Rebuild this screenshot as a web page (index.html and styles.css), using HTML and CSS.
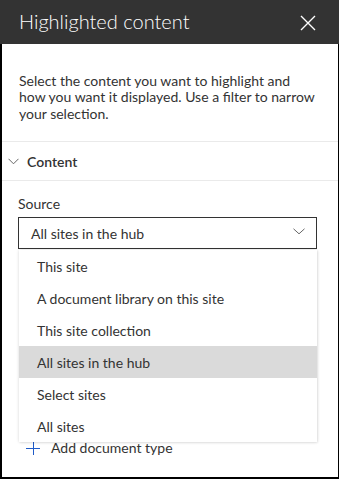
FILE: index.html
```html
<!DOCTYPE html>
<html lang="en">
<head>
<meta charset="utf-8">
<title>Highlighted content</title>
<link rel="stylesheet" href="styles.css">
</head>
<body>
<div class="panel">
  <header class="panel-head">
    <h1 class="panel-title">Highlighted content</h1>
    <button class="close-btn" aria-label="Close">
      <svg width="16" height="16" viewBox="0 0 16 16"><path d="M1 1 L15 15 M15 1 L1 15" stroke="#fff" stroke-width="1.4" fill="none"/></svg>
    </button>
  </header>
  <div class="panel-body">
    <p class="intro">Select the content you want to highlight and how you want it displayed. Use a filter to narrow your selection.</p>
    <section class="group">
      <div class="group-head">
        <svg class="group-chevron" width="11" height="7" viewBox="0 0 11 7"><path d="M0.5 0.8 L5.5 5.8 L10.5 0.8" stroke="#666" stroke-width="1" fill="none"/></svg>
        <span>Content</span>
      </div>
      <div class="group-body">
        <label class="field-label">Source</label>
        <div class="select-wrap">
          <div class="select">
            <span>All sites in the hub</span>
            <svg width="12" height="7" viewBox="0 0 12 7"><path d="M0.5 0.8 L6 5.8 L11.5 0.8" stroke="#666" stroke-width="1" fill="none"/></svg>
          </div>
          <ul class="menu">
            <li class="menu-item">This site</li>
            <li class="menu-item">A document library on this site</li>
            <li class="menu-item">This site collection</li>
            <li class="menu-item is-selected">All sites in the hub</li>
            <li class="menu-item">Select sites</li>
            <li class="menu-item">All sites</li>
          </ul>
        </div>
        <div class="add-row">
          <svg width="14" height="14" viewBox="0 0 14 14"><path d="M7.5 0 V14 M0 7.5 H14" stroke="#1f5bc8" stroke-width="1" fill="none"/></svg>
          <span>Add document type</span>
        </div>
      </div>
    </section>
  </div>
</div>
</body>
</html>
```
FILE: styles.css
```css
html, body {
  margin: 0;
  padding: 0;
  background: #fff;
}
body {
  width: 339px;
  height: 479px;
  overflow: hidden;
  font-family: "Lato", "Open Sans", sans-serif;
  font-size: 14px;
  color: #333;
}
.panel {
  width: 339px;
  height: 479px;
  display: flex;
  flex-direction: column;
}
.panel-head {
  height: 44px;
  flex: none;
  background: #333;
  display: flex;
  align-items: center;
  justify-content: space-between;
  padding: 0 23px 0 19px;
  box-sizing: border-box;
}
.panel-title {
  margin: 0 0 2px 0;
  font-weight: 300;
  font-size: 20px;
  line-height: 24px;
  color: #fff;
}
.close-btn {
  border: 0;
  padding: 0;
  margin-top: 2px;
  background: transparent;
  width: 16px;
  height: 16px;
  display: flex;
}
.panel-body {
  flex: 1;
  border-left: 2px solid #000;
  border-right: 1px solid #000;
  border-bottom: 2px solid #000;
  box-sizing: border-box;
}
.intro {
  margin: 29px 0 18.8px 17px;
  width: 298px;
  line-height: 16.4px;
}
.group-head {
  height: 40px;
  box-sizing: border-box;
  border-top: 1px solid #eaeaea;
  border-bottom: 1px solid #eaeaea;
  padding: 2px 0 0 6px;
  display: flex;
  align-items: center;
  gap: 8px;
  font-weight: 600;
  line-height: 36px;
}
.group-chevron {
  margin-top: -2px;
}
.group-body {
  padding: 13px 0 0 16px;
}
.field-label {
  display: block;
  line-height: 20px;
  margin-bottom: 3px;
}
.select-wrap {
  position: relative;
  width: 299px;
}
.select {
  height: 32px;
  box-sizing: border-box;
  border: 1px solid #333;
  padding: 1px 11px 0 12px;
  display: flex;
  align-items: center;
  justify-content: space-between;
  line-height: 30px;
}
.select svg {
  margin-top: -4px;
}
.menu {
  position: absolute;
  top: 33px;
  left: 1px;
  width: 298px;
  margin: 0;
  padding: 0;
  list-style: none;
  background: #fff;
  box-shadow: 0 0 3px rgba(0, 0, 0, 0.16), 1px 1px 2px rgba(0, 0, 0, 0.06);
  z-index: 2;
}
.menu-item {
  height: 32px;
  box-sizing: border-box;
  padding: 1px 0 0 18px;
  line-height: 31px;
  color: #333;
}
.menu-item.is-selected {
  background: #dadada;
}
.add-row {
  margin-top: 189px;
  height: 20px;
  display: flex;
  align-items: center;
  gap: 11px;
  padding-left: 8px;
  line-height: 20px;
}
```
